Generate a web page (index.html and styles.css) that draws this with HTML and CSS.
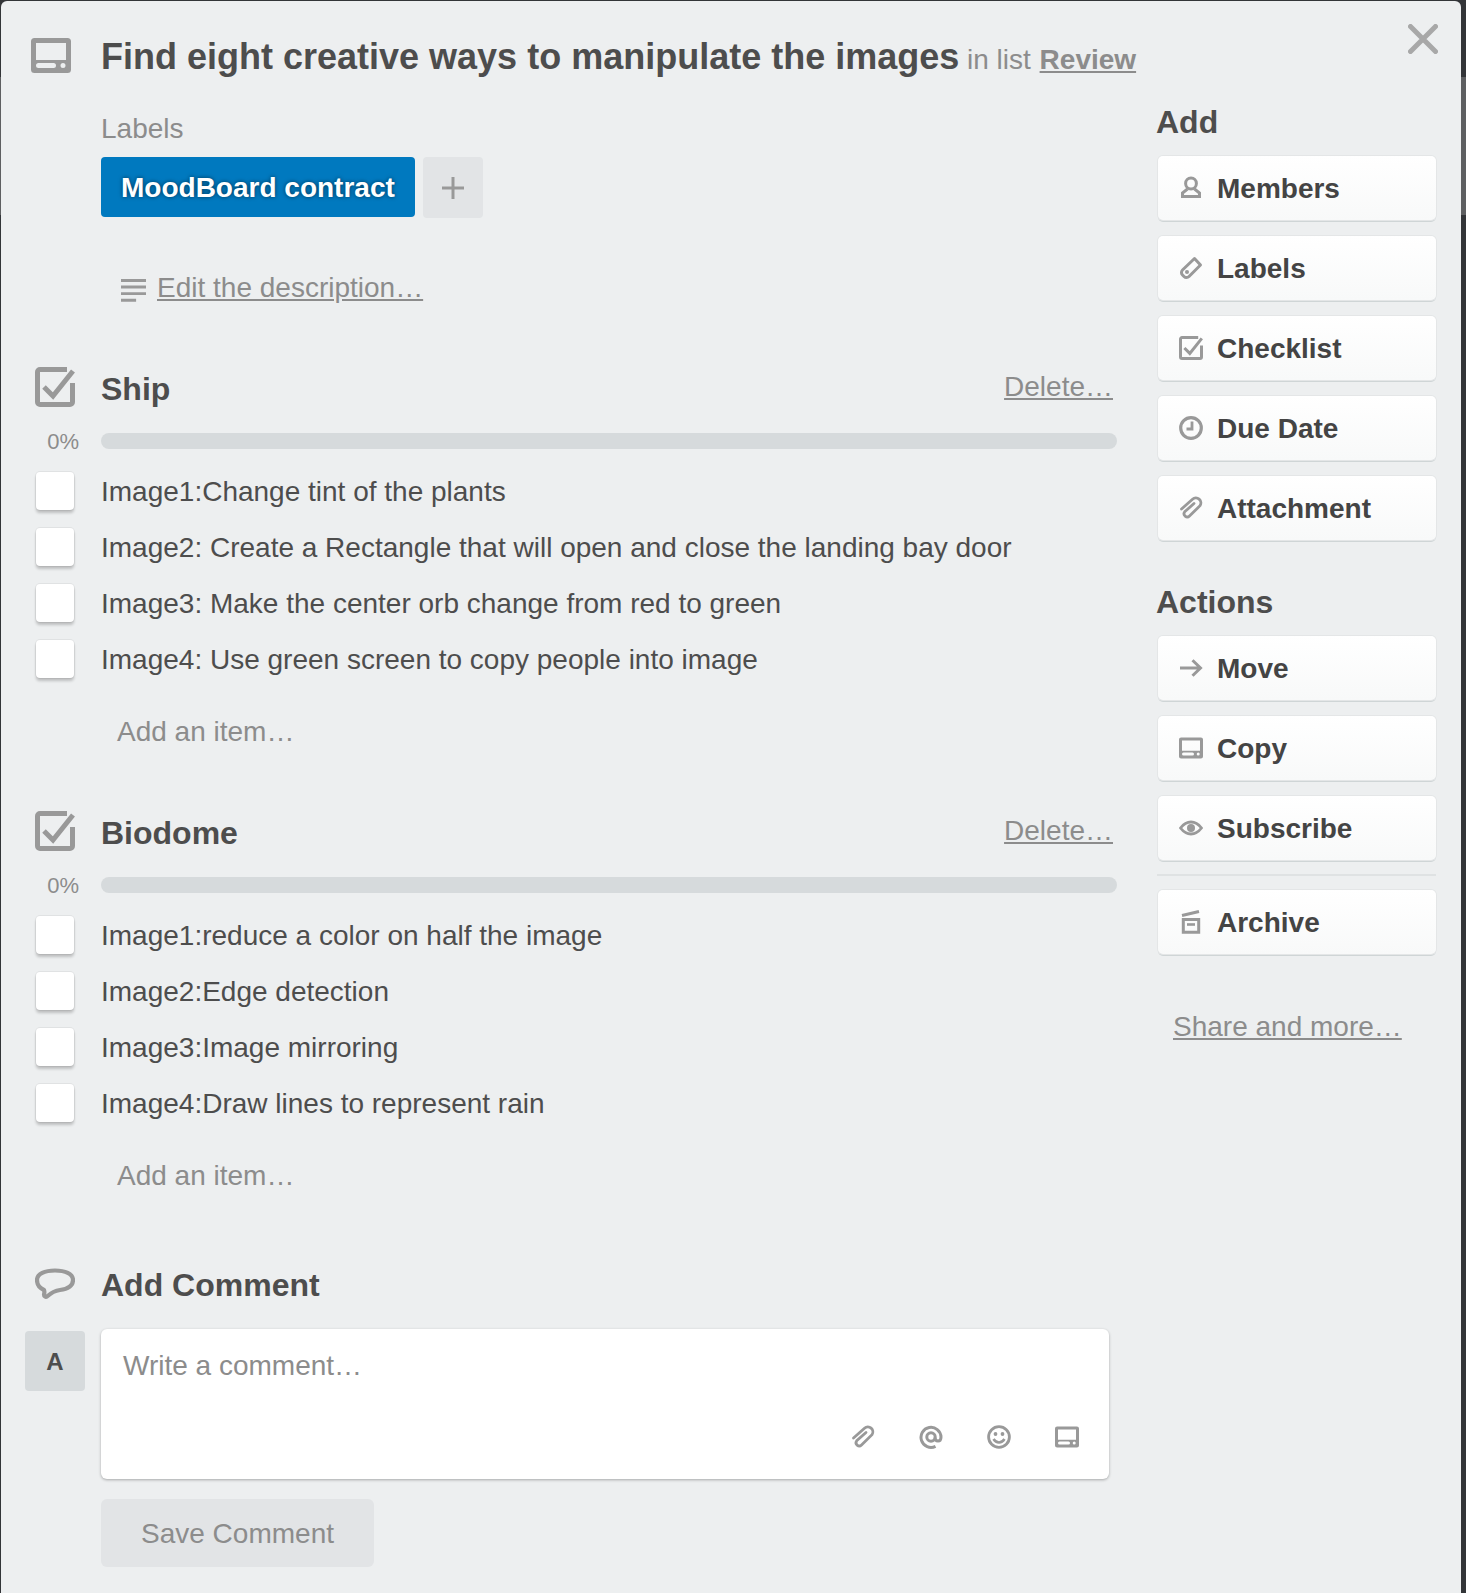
FILE: index.html
```html
<!DOCTYPE html>
<html lang="en">
<head>
<meta charset="utf-8">
<title>Card</title>
<link rel="stylesheet" href="styles.css">
</head>
<body>
<svg class="defs" width="0" height="0" aria-hidden="true">
  <symbol id="i-card" viewBox="0 0 40 35"><path fill-rule="evenodd" d="M3.500 0h33A3.500 3.500 0 0 1 40 3.500v28a3.500 3.500 0 0 1-3.500 3.500h-33A3.500 3.500 0 0 1 0 31.500v-28A3.500 3.500 0 0 1 3.500 0zM5 5v17h30V5zM7.500 25a2.500 2.500 0 0 0 0 5h15a2.500 2.500 0 0 0 0-5zM32 25a2.500 2.500 0 1 0 0 5 2.500 2.500 0 0 0 0-5z"/></symbol>
  <symbol id="i-check" viewBox="0 0 40 40"><path fill="none" stroke="currentColor" stroke-width="5" d="M32 2.500H5A2.500 2.500 0 0 0 2.500 5v30A2.500 2.500 0 0 0 5 37.500h30a2.500 2.500 0 0 0 2.500-2.500V16"/><path fill="none" stroke="currentColor" stroke-width="5" d="M9 20l9 9L38 4"/></symbol>
  <symbol id="i-clip" viewBox="0 0 24 24"><path fill="none" stroke="currentColor" stroke-width="2.800" stroke-linecap="round" d="M2.500 13L13.500 3.200a5 5 0 0 1 7.500 6.500L10.500 20a3.200 3.200 0 0 1-4.800-4.200L15 7.500"/></symbol>
  <symbol id="i-person" viewBox="0 0 24 24"><circle cx="12" cy="7.500" r="5.400" fill="none" stroke="currentColor" stroke-width="3"/><path fill="none" stroke="currentColor" stroke-width="3" d="M8.500 13L3.500 17v3.500h17V17l-5-4"/></symbol>
  <symbol id="i-tag" viewBox="0 0 24 24"><path fill="none" stroke="currentColor" stroke-width="3" stroke-linejoin="round" d="M15.500 2.500l6 6.500L10 20.500a3.500 3.500 0 0 1-5 0L3.500 19a3.500 3.500 0 0 1 0-5z"/><circle cx="8" cy="16" r="2" fill="currentColor"/></symbol>
  <symbol id="i-clock" viewBox="0 0 24 24"><circle cx="12" cy="12" r="10.300" fill="none" stroke="currentColor" stroke-width="3.200"/><path fill="none" stroke="currentColor" stroke-width="2.800" d="M13 5.500v7.500H7.500"/></symbol>
  <symbol id="i-arrow" viewBox="0 0 24 24"><path fill="none" stroke="currentColor" stroke-width="3" d="M1 12h20.500M13.500 4.200l8 7.800-8 7.800"/></symbol>
  <symbol id="i-eye" viewBox="0 0 24 24"><path fill="none" stroke="currentColor" stroke-width="2.800" d="M1.500 12C5 7.500 8.500 6 12 6s7 1.500 10.500 6C19 16.500 15.500 18 12 18s-7-1.500-10.500-6z"/><circle cx="12" cy="12" r="4" fill="currentColor"/></symbol>
  <symbol id="i-archive" viewBox="0 0 24 24"><path fill="none" stroke="currentColor" stroke-width="3" d="M3 5.500L20 1.500M4.300 9.500h15.400v12.700H4.300z"/><path fill="none" stroke="currentColor" stroke-width="2.600" d="M8 14.500h8"/></symbol>
  <symbol id="i-at" viewBox="0 0 24 24"><path fill="none" stroke="currentColor" stroke-width="3" d="M16.500 21.300A10 10 0 1 1 22 12c0 2.500-1 4-3 4s-3-1.500-3-3.500"/><circle cx="12" cy="12" r="4.200" fill="none" stroke="currentColor" stroke-width="3"/></symbol>
  <symbol id="i-smile" viewBox="0 0 24 24"><circle cx="12" cy="12" r="10.400" fill="none" stroke="currentColor" stroke-width="2.800"/><circle cx="8.500" cy="9" r="1.900" fill="currentColor"/><circle cx="15.500" cy="9" r="1.900" fill="currentColor"/><path fill="none" stroke="currentColor" stroke-width="2.600" d="M6.500 14c1.500 2.500 3.500 3.500 5.500 3.500s4-1 5.500-3.500"/></symbol>
  <symbol id="i-comment" viewBox="0 0 40 32"><path fill="none" stroke="currentColor" stroke-width="4.200" stroke-linejoin="round" d="M20 2.500c10 0 18 3 18 9.500 0 6-5 9-13 10-4 .5-8 2-13 6.500-1.500 1-3-.5-3-2 .5-1.500.5-3 0-4.500C4.500 20 2 16.500 2 12 2 5.500 10 2.500 20 2.500z"/></symbol>
  <symbol id="i-desc" viewBox="0 0 24 22"><path fill="currentColor" d="M0 0h24v2.800H0zM0 6.300h24v2.800H0zM0 12.600h24v2.800H0zM0 19h14.500v2.800H0z"/></symbol>
</svg>

<div class="rail rail-left"></div>
<div class="rail rail-right"></div>

<main class="window">
  <button class="close" aria-label="Close">
    <svg viewBox="0 0 30 30" width="30" height="30"><path fill="none" stroke="currentColor" stroke-width="5" stroke-linecap="round" d="M2.500 2.500l25 25M27.500 2.500l-25 25"/></svg>
  </button>

  <header class="card-head">
    <svg class="section-icon card-icon"><use href="#i-card"/></svg>
    <h1 class="card-title">Find eight creative ways to manipulate the images<span class="in-list"> in list <a class="list-link">Review</a></span></h1>
  </header>

  <div class="columns">
    <div class="main-col">
      <section class="labels">
        <h3 class="labels-title">Labels</h3>
        <div class="label-row">
          <span class="label-chip">MoodBoard contract</span>
          <span class="label-add">
            <svg viewBox="0 0 22 22" width="22" height="22"><path fill="currentColor" d="M9.500 0h3v9.500H22v3h-9.500V22h-3v-9.500H0v-3h9.500z"/></svg>
          </span>
        </div>
      </section>

      <div class="desc-row">
        <svg class="desc-icon"><use href="#i-desc"/></svg>
        <a class="muted-link">Edit the description…</a>
      </div>

      <section class="checklist">
        <div class="checklist-head">
          <svg class="section-icon check-icon"><use href="#i-check"/></svg>
          <h2 class="section-title">Ship</h2>
          <a class="muted-link delete">Delete…</a>
        </div>
        <div class="progress"><span class="percent">0%</span><div class="bar"></div></div>
        <div class="items">
          <div class="item"><span class="box"></span><span class="item-text">Image1:Change tint of the plants</span></div>
          <div class="item"><span class="box"></span><span class="item-text">Image2: Create a Rectangle that will open and close the landing bay door</span></div>
          <div class="item"><span class="box"></span><span class="item-text">Image3: Make the center orb change from red to green</span></div>
          <div class="item"><span class="box"></span><span class="item-text">Image4: Use green screen to copy people into image</span></div>
        </div>
        <div class="add-item">Add an item…</div>
      </section>

      <section class="checklist">
        <div class="checklist-head">
          <svg class="section-icon check-icon"><use href="#i-check"/></svg>
          <h2 class="section-title">Biodome</h2>
          <a class="muted-link delete">Delete…</a>
        </div>
        <div class="progress"><span class="percent">0%</span><div class="bar"></div></div>
        <div class="items">
          <div class="item"><span class="box"></span><span class="item-text">Image1:reduce a color on half the image</span></div>
          <div class="item"><span class="box"></span><span class="item-text">Image2:Edge detection</span></div>
          <div class="item"><span class="box"></span><span class="item-text">Image3:Image mirroring</span></div>
          <div class="item"><span class="box"></span><span class="item-text">Image4:Draw lines to represent rain</span></div>
        </div>
        <div class="add-item">Add an item…</div>
      </section>

      <section class="comment">
        <div class="comment-head">
          <svg class="section-icon comment-icon"><use href="#i-comment"/></svg>
          <h2 class="section-title">Add Comment</h2>
        </div>
        <div class="comment-row">
          <div class="avatar">A</div>
          <div class="comment-body">
            <div class="comment-box">
              <div class="placeholder">Write a comment…</div>
              <div class="comment-tools">
                <svg class="tool"><use href="#i-clip"/></svg>
                <svg class="tool"><use href="#i-at"/></svg>
                <svg class="tool"><use href="#i-smile"/></svg>
                <svg class="tool"><use href="#i-card"/></svg>
              </div>
            </div>
            <button class="save">Save Comment</button>
          </div>
        </div>
      </section>
    </div>

    <aside class="side">
      <h3 class="side-title">Add</h3>
      <a class="side-btn"><svg class="btn-icon"><use href="#i-person"/></svg>Members</a>
      <a class="side-btn"><svg class="btn-icon"><use href="#i-tag"/></svg>Labels</a>
      <a class="side-btn"><svg class="btn-icon"><use href="#i-check"/></svg>Checklist</a>
      <a class="side-btn"><svg class="btn-icon"><use href="#i-clock"/></svg>Due Date</a>
      <a class="side-btn"><svg class="btn-icon"><use href="#i-clip"/></svg>Attachment</a>

      <h3 class="side-title actions-title">Actions</h3>
      <a class="side-btn"><svg class="btn-icon"><use href="#i-arrow"/></svg>Move</a>
      <a class="side-btn"><svg class="btn-icon"><use href="#i-card"/></svg>Copy</a>
      <a class="side-btn"><svg class="btn-icon"><use href="#i-eye"/></svg>Subscribe</a>
      <hr class="side-rule">
      <a class="side-btn"><svg class="btn-icon"><use href="#i-archive"/></svg>Archive</a>
      <a class="muted-link share">Share and more…</a>
    </aside>
  </div>
</main>
</body>
</html>
```

FILE: styles.css
```css
* { box-sizing: border-box; }
html, body { margin: 0; height: 100%; }
body {
  background: #333538;
  font-family: "Liberation Sans", Arial, sans-serif;
  color: #4d4d4d;
  overflow: hidden;
  position: relative;
  width: 1466px;
  height: 1593px;
}
.defs { position: absolute; }
.rail { position: absolute; top: 77px; height: 138px; background: #5e5f61; }
.rail-right { left: 1461px; width: 5px; }
.rail-left { left: 0; width: 1px; }

.window {
  position: absolute;
  left: 1px;
  top: 1px;
  width: 1460px;
  height: 1592px;
  background: #edeff0;
  border-radius: 6px 6px 0 0;
}
.close {
  position: absolute;
  left: 1407px;
  top: 23px;
  width: 30px;
  height: 30px;
  padding: 0;
  border: 0;
  background: none;
  color: #a8a8a8;
}
.close svg { display: block; }

.card-head { display: flex; height: 108px; padding-left: 30px; padding-top: 36px; }
.section-icon { color: #999; fill: currentColor; display: block; flex: none; }
.card-icon { width: 40px; height: 35px; margin-top: 1px; }
.card-title {
  margin: 0 0 0 30px;
  font-size: 36px;
  line-height: 40px;
  font-weight: 700;
  color: #4d4d4d;
  white-space: nowrap;
}
.in-list { font-size: 28px; font-weight: 400; color: #8c8c8c; }
.list-link { font-weight: 700; text-decoration: underline; margin-left: 1px; }

.columns { display: flex; }
.main-col { width: 1156px; flex: none; }

.labels { padding-left: 100px; }
.labels-title { margin: 0; font-size: 28px; line-height: 40px; font-weight: 400; color: #8c8c8c; }
.label-row { display: flex; gap: 8px; margin-top: 8px; }
.label-chip {
  height: 60px;
  width: 314px;
  padding: 1px 0 0 20px;
  background: #0079bf;
  border-radius: 4px;
  color: #fff;
  font-size: 28px;
  font-weight: 700;
  line-height: 60px;
  text-shadow: 0 0 4px rgba(0,0,0,.55);
  white-space: nowrap;
}
.label-add {
  width: 60px;
  height: 61px;
  background: #e2e4e6;
  border-radius: 4px;
  color: #999;
  display: flex;
  align-items: center;
  justify-content: center;
}

.desc-row { display: flex; align-items: center; padding-left: 120px; margin-top: 50px; height: 40px; gap: 11px; }
.desc-icon { width: 25px; height: 23px; color: #999; margin-top: 4px; }
.muted-link { color: #8c8c8c; text-decoration: underline; font-size: 28px; line-height: 40px; }

.checklist { height: 444px; }
.desc-row + .checklist { margin-top: 59px; }
.checklist-head { display: flex; align-items: center; height: 40px; padding-left: 34px; }
.check-icon { width: 40px; height: 40px; }
.section-title { margin: 3px 0 0 26px; font-size: 32px; line-height: 40px; font-weight: 700; color: #4d4d4d; }
.delete { margin-left: auto; margin-right: 44px; margin-top: 0; }

.progress { display: flex; align-items: center; margin-top: 19px; height: 30px; }
.percent { width: 78px; padding-top: 1px; text-align: right; font-size: 22px; color: #8c8c8c; flex: none; }
.bar { width: 1016px; height: 16px; margin-left: 22px; background: #d6dadc; border-radius: 8px; }

.items { margin-top: 7px; }
.item { display: flex; align-items: center; height: 56px; font-size: 28px; color: #4d4d4d; white-space: nowrap; }
.item-text { padding-top: 2px; }
.box {
  width: 38px;
  height: 38px;
  margin-left: 35px;
  margin-right: 27px;
  background: #fff;
  border-radius: 4px;
  box-shadow: 0 3px 3px rgba(0,0,0,.2), 0 0 0 1px rgba(0,0,0,.05);
  flex: none;
}
.add-item { margin: 25px 0 0 116px; font-size: 28px; line-height: 40px; color: #8c8c8c; }

.comment { margin-top: 8px; }
.comment-head { display: flex; align-items: center; height: 42px; padding-left: 34px; }
.comment-icon { width: 40px; height: 32px; }
.comment-head .section-title { margin-top: 1px; }
.comment-row { display: flex; margin-top: 24px; padding-left: 24px; }
.avatar {
  width: 60px;
  height: 60px;
  margin-top: 2px;
  padding-top: 1px;
  background: #d6dadc;
  border-radius: 4px;
  font-size: 24px;
  font-weight: 700;
  line-height: 60px;
  text-align: center;
  color: #4d4d4d;
  flex: none;
}
.comment-body { margin-left: 16px; }
.comment-box {
  position: relative;
  width: 1008px;
  height: 150px;
  background: #fff;
  border-radius: 6px;
  box-shadow: 0 1px 3px rgba(0,0,0,.3);
  padding: 17px 22px;
}
.placeholder { font-size: 28px; line-height: 40px; color: #8c8c8c; }
.comment-tools { position: absolute; right: 30px; top: 96px; display: flex; gap: 44px; }
.tool { width: 24px; height: 24px; color: #999; fill: currentColor; display: block; }
.save {
  display: block;
  margin-top: 20px;
  width: 273px;
  height: 68px;
  border: 0;
  padding: 2px 0 0;
  background: #e2e4e6;
  border-radius: 6px;
  font-family: inherit;
  font-size: 28px;
  color: #8c8c8c;
}

.side { width: 279px; margin-top: -7px; }
.side-title { margin: 0 0 0 -1px; font-size: 32px; line-height: 40px; font-weight: 700; color: #4d4d4d; }
.actions-title { margin-top: 42px; }
.side-btn {
  display: flex;
  align-items: center;
  height: 64px;
  margin: 16px 0 0 1px;
  padding: 2px 0 0 21px;
  border-radius: 5px;
  background: linear-gradient(#fff, #f8f9f9);
  box-shadow: 0 0 0 1px #e4e6e7, 0 2px 0 #cfd5d6;
  font-size: 28px;
  font-weight: 700;
  color: #444;
}
.side-title + .side-btn { margin-top: 14px; }
.btn-icon { width: 24px; height: 24px; margin-right: 14px; margin-top: -2px; color: #999; fill: currentColor; flex: none; }
.side-rule { margin: 14px 0 0; border: 0; height: 2px; background: #dfe2e3; width: 279px; }
.side-rule + .side-btn { margin-top: 14px; }
.share { display: block; margin-top: 53px; margin-left: 16px; }
```
